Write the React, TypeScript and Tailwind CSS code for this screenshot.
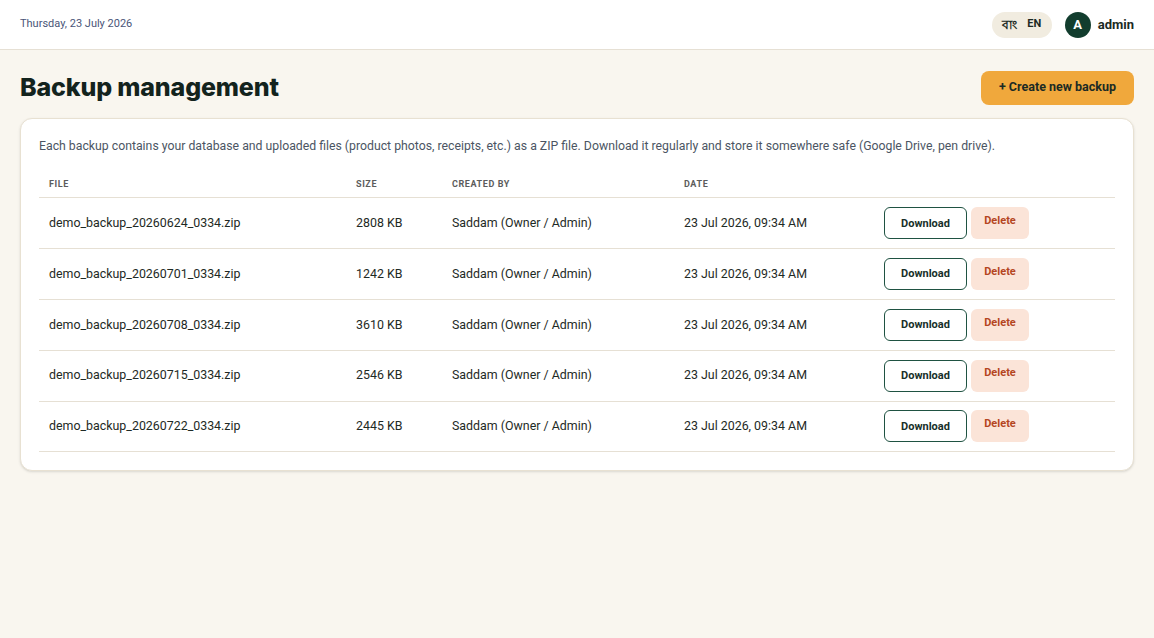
const backups = [
  { file: "demo_backup_20260624_0334.zip", size: "2808 KB" },
  { file: "demo_backup_20260701_0334.zip", size: "1242 KB" },
  { file: "demo_backup_20260708_0334.zip", size: "3610 KB" },
  { file: "demo_backup_20260715_0334.zip", size: "2546 KB" },
  { file: "demo_backup_20260722_0334.zip", size: "2445 KB" },
];

const Header = () => (
  <header className="h-[50px] bg-white border-b border-[#e6e0d4] flex items-center justify-between px-5">
    <div className="text-[11px] text-[#4a5578]">Thursday, 23 July 2026</div>
    <div className="flex items-center gap-[13px]">
      <div className="h-[26px] w-[60px] rounded-full bg-[#f1ece0] flex items-center justify-center gap-[10px] text-[11px] font-bold text-[#1b2a24]">
        <span className="text-[12px]" style={{ fontFamily: '"Noto Sans", sans-serif' }}>বাং</span>
        <span>EN</span>
      </div>
      <div className="flex items-center gap-[7px]">
        <div className="w-[26px] h-[26px] rounded-full bg-[#123d2e] text-white text-[13px] font-bold flex items-center justify-center">
          A
        </div>
        <span className="text-[13px] font-bold text-[#1b2a24]">admin</span>
      </div>
    </div>
  </header>
);

const BackupRow = ({ file, size }: { file: string; size: string }) => (
  <tr className="border-b border-[#e6e0d4] h-[50.8px] text-[12.4px] text-[#1e2a25]">
    <td className="pl-[10px]">{file}</td>
    <td className="pl-[10px]">{size}</td>
    <td className="pl-[10px]">Saddam (Owner / Admin)</td>
    <td className="pl-[10px]">23 Jul 2026, 09:34 AM</td>
    <td className="pl-[10px]">
      <div className="flex items-center gap-[4px]">
        <button className="h-[32px] w-[83px] rounded-md border border-[#1f5242] bg-white text-[11px] font-bold text-[#17302a] pt-[1px]">
          Download
        </button>
        <button className="h-[32px] w-[58px] rounded-md bg-[#fbe4d8] text-[11px] font-bold text-[#b5461f] pb-[4px]">
          Delete
        </button>
      </div>
    </td>
  </tr>
);

export default function App() {
  return (
    <div
      className="min-h-[638px] bg-[#f9f6ef]"
      style={{ fontFamily: 'Roboto, "Noto Sans", sans-serif' }}
    >
      <Header />
      <main className="px-5 pt-[19px]">
        <div className="flex items-center justify-between mb-[11px]">
          <h1
            className="text-[25px] font-extrabold text-[#13231d] tracking-[-0.15px]"
            style={{ fontFamily: "Inter, sans-serif" }}
          >
            Backup management
          </h1>
          <button className="h-[34px] w-[153px] rounded-lg bg-[#f0a83c] text-[12.5px] font-bold text-[#1b2a24]">
            + Create new backup
          </button>
        </div>
        <section className="bg-white border border-[#e8e1d2] rounded-xl shadow-sm px-[18px] pt-[18px] pb-[18px]">
          <p className="text-[12.27px] text-[#4b5563] mb-[23px]">
            Each backup contains your database and uploaded files (product photos, receipts, etc.) as a ZIP file.
            Download it regularly and store it somewhere safe (Google Drive, pen drive).
          </p>
          <table className="w-full table-fixed border-collapse text-left">
            <colgroup>
              <col className="w-[307px]" />
              <col className="w-[96px]" />
              <col className="w-[232px]" />
              <col className="w-[200px]" />
              <col />
            </colgroup>
            <thead>
              <tr className="border-b border-[#e6e0d4] h-[20px] align-top">
                {["File", "Size", "Created by", "Date", ""].map((h, i) => (
                  <th
                    key={i}
                    className="pl-[10px] text-[9px] font-bold uppercase tracking-[0.6px] text-[#5c5c5c]"
                  >
                    {h}
                  </th>
                ))}
              </tr>
            </thead>
            <tbody>
              {backups.map((b) => (
                <BackupRow key={b.file} file={b.file} size={b.size} />
              ))}
            </tbody>
          </table>
        </section>
      </main>
    </div>
  );
}
